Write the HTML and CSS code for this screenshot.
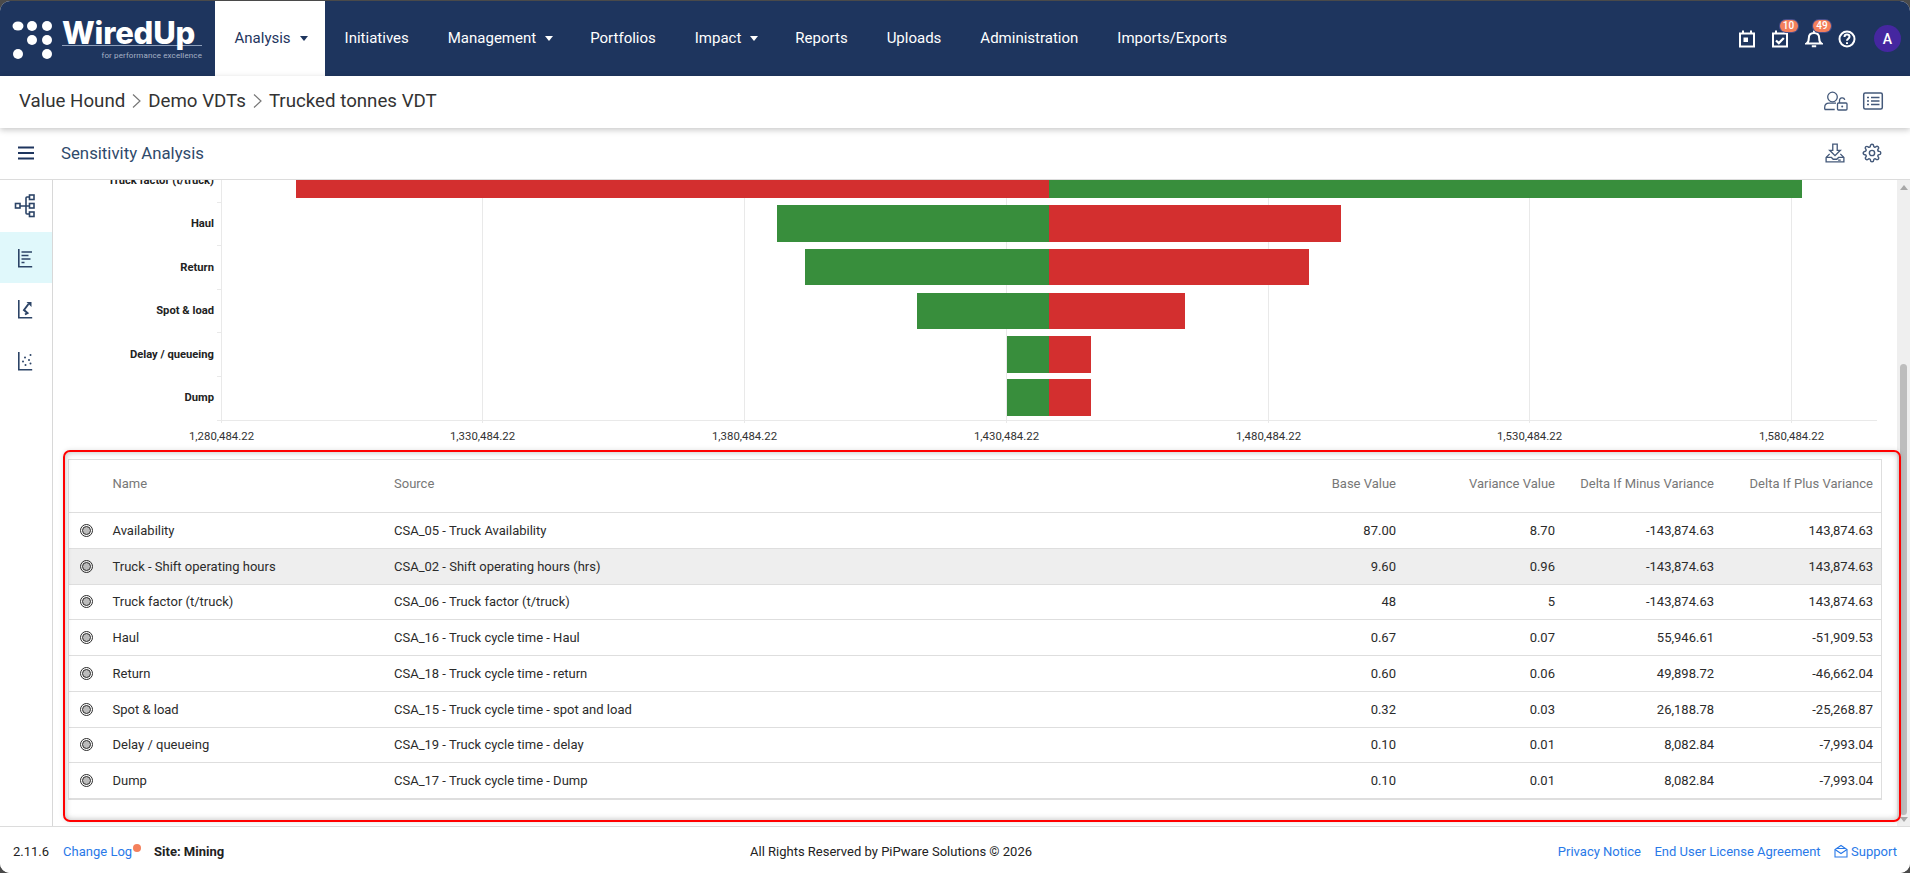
FILE: index.html
```html
<!DOCTYPE html>
<html lang="en">
<head>
<meta charset="utf-8">
<title>Sensitivity Analysis</title>
<link rel="stylesheet" href="styles.css">
</head>
<body>
<div class="app">
  <header class="topbar">
    <div class="logo">
      <svg class="logo-dots" width="48" height="40" viewBox="0 0 48 40"><g fill="#fff"><ellipse cx="6" cy="7" rx="5.5" ry="4.5"/><circle cx="20" cy="7" r="5"/><circle cx="35" cy="7" r="5"/><circle cx="20" cy="21" r="5"/><circle cx="35" cy="21" r="5"/><circle cx="6" cy="35" r="5"/><circle cx="35" cy="35" r="5"/></g></svg>
      <div class="logo-text">
        <div class="logo-name">WiredUp</div>
        <div class="logo-tag">for performance excellence</div>
      </div>
    </div>
    <nav class="nav">
      <a class="nav-item active">Analysis<span class="caret"></span></a>
      <a class="nav-item">Initiatives</a>
      <a class="nav-item">Management<span class="caret"></span></a>
      <a class="nav-item">Portfolios</a>
      <a class="nav-item">Impact<span class="caret"></span></a>
      <a class="nav-item">Reports</a>
      <a class="nav-item">Uploads</a>
      <a class="nav-item">Administration</a>
      <a class="nav-item">Imports/Exports</a>
    </nav>
    <div class="top-actions">
      <span class="top-icon"><svg width="18" height="18" viewBox="0 0 18 18" fill="none" stroke="#fff" stroke-width="2"><rect x="2" y="3.500" width="14" height="13"/><path d="M5 0.500v3M13 0.500v3"/><rect x="5.500" y="7.500" width="4.500" height="4.500" fill="#fff" stroke="none"/></svg></span>
      <span class="top-icon"><svg width="18" height="18" viewBox="0 0 18 18" fill="none" stroke="#fff" stroke-width="2"><rect x="2" y="3.500" width="14" height="13"/><path d="M5 0.500v3M13 0.500v3"/><path d="M5 10.500l2.800 2.600 5-5.200" stroke-width="2.200"/></svg><span class="badge">10</span></span>
      <span class="top-icon"><svg width="18" height="18" viewBox="0 0 18 18" fill="none" stroke="#fff" stroke-width="2"><path d="M1.500 13.500c1.800-1.200 2.300-2.600 2.300-5.300 0-3.100 2-5.200 5.200-5.200s5.200 2.100 5.200 5.200c0 2.700.5 4.100 2.300 5.300z"/><path d="M9 0.500v2M6.800 16.200h4.400"/></svg><span class="badge">49</span></span>
      <span class="top-icon"><svg width="18" height="18" viewBox="0 0 18 18" fill="none" stroke="#fff" stroke-width="2"><circle cx="9" cy="9" r="7.500"/><path d="M6.500 7c0-1.500 1.100-2.400 2.500-2.400S11.500 5.500 11.500 6.800c0 1.900-2.500 1.900-2.500 3.900"/><path d="M9 12.200v1.800"/></svg></span>
      <span class="avatar">A</span>
    </div>
  </header>

  <div class="crumbbar">
    <div class="crumbs">
      <span>Value Hound</span>
      <svg class="chev" width="9" height="16" viewBox="0 0 9 16" fill="none" stroke="#777" stroke-width="1.200"><path d="M1 1.500l7 6.500-7 6.500"/></svg>
      <span>Demo VDTs</span>
      <svg class="chev" width="9" height="16" viewBox="0 0 9 16" fill="none" stroke="#777" stroke-width="1.200"><path d="M1 1.500l7 6.500-7 6.500"/></svg>
      <span>Trucked tonnes VDT</span>
    </div>
    <div class="bar-icons">
      <svg width="24" height="24" viewBox="0 0 24 24" fill="none" stroke="#44597a" stroke-width="1.300"><circle cx="8.500" cy="8" r="4.800"/><path d="M0.700 20.500v-2c0-2.800 2-4.300 4.300-4.300h7"/><path d="M0.700 20.500h10"/><rect x="13.500" y="14" width="9.500" height="7" rx="1"/><path d="M15.500 14v-2.500a2.700 2.700 0 0 1 5.300-.6"/><circle cx="18.200" cy="17.500" r="1" fill="#44597a" stroke="none"/></svg>
      <svg width="24" height="24" viewBox="0 0 24 24" fill="none" stroke="#44597a" stroke-width="1.500"><rect x="2.700" y="4" width="18.600" height="16" rx="1.500"/><path d="M6 8.500h2M6 12h2M6 15.500h2M10 8.500h8.500M10 12h8.500M10 15.500h8.500"/></svg>
    </div>
  </div>

  <div class="titlebar">
    <svg class="burger" width="16" height="14" viewBox="0 0 16 14" fill="none" stroke="#1e355e" stroke-width="1.800"><path d="M0 1.500h16M0 7h16M0 12.500h16"/></svg>
    <div class="page-title">Sensitivity Analysis</div>
    <div class="bar-icons">
      <svg width="24" height="24" viewBox="-1.500 -1.500 27 27" fill="none" stroke="#44597a" stroke-width="1.500"><path d="M9.500 2h5v7h3.500L12 15 6 9h3.500z"/><path d="M6 13L2 17v5h20v-5l-4-4"/><path d="M2 17h6l2 2h4l2-2h6"/><path d="M15.500 20h3"/></svg>
      <svg width="24" height="24" viewBox="-3 -3 30 30" fill="none" stroke="#44597a" stroke-width="1.800"><circle cx="12" cy="12" r="3.300"/><path d="M19.400 15a1.650 1.650 0 0 0 .33 1.820l.06.06a2 2 0 0 1 0 2.830 2 2 0 0 1-2.830 0l-.06-.06a1.650 1.650 0 0 0-1.820-.33 1.650 1.650 0 0 0-1 1.510V21a2 2 0 0 1-2 2 2 2 0 0 1-2-2v-.09A1.650 1.650 0 0 0 9 19.400a1.650 1.650 0 0 0-1.820.33l-.06.06a2 2 0 0 1-2.830 0 2 2 0 0 1 0-2.830l.06-.06a1.650 1.650 0 0 0 .33-1.820 1.650 1.650 0 0 0-1.510-1H3a2 2 0 0 1-2-2 2 2 0 0 1 2-2h.09A1.650 1.650 0 0 0 4.600 9a1.650 1.650 0 0 0-.33-1.820l-.06-.06a2 2 0 0 1 0-2.830 2 2 0 0 1 2.830 0l.06.06a1.650 1.650 0 0 0 1.820.33H9a1.650 1.650 0 0 0 1-1.510V3a2 2 0 0 1 2-2 2 2 0 0 1 2 2v.09a1.650 1.650 0 0 0 1 1.510 1.650 1.650 0 0 0 1.820-.33l.06-.06a2 2 0 0 1 2.830 0 2 2 0 0 1 0 2.830l-.06.06a1.650 1.650 0 0 0-.33 1.820V9a1.650 1.650 0 0 0 1.510 1H21a2 2 0 0 1 2 2 2 2 0 0 1-2 2h-.09a1.650 1.650 0 0 0-1.510 1z"/></svg>
    </div>
  </div>

  <main class="main">
    <aside class="sidebar">
      <div class="side-item"><svg width="24" height="24" viewBox="0 0 24 24" fill="none" stroke="#2c4467" stroke-width="1.600"><rect x="1.500" y="9.500" width="4.500" height="4.500"/><rect x="15.500" y="1" width="4.500" height="4.500"/><rect x="15.500" y="9.500" width="4.500" height="4.500"/><rect x="15.500" y="18" width="4.500" height="4.500"/><path d="M6 12h9.500M15.500 3h-2.500q-1 0-1 1v15q0 1 1 1h2.500"/></svg></div>
      <div class="side-item active"><svg width="24" height="24" viewBox="0 0 24 24" fill="none" stroke="#2c4467" stroke-width="1.600"><path d="M4.800 3v17.800h13.400"/><path d="M7.500 6h10.500M7.500 9.500h7M7.500 13h9M7.500 16.500h3"/></svg></div>
      <div class="side-item"><svg width="24" height="24" viewBox="0 0 24 24" fill="none" stroke="#2c4467" stroke-width="1.600"><path d="M4.800 3v17.800h13.400"/><path d="M11 17.500l2.500-1.500-3.500-3 4.500-6" stroke-width="2"/><path d="M12.500 5h5v5z" fill="#2c4467" stroke="none"/></svg></div>
      <div class="side-item"><svg width="24" height="24" viewBox="0 0 24 24" fill="none" stroke="#2c4467" stroke-width="1.600"><path d="M4.800 3v17.800h13.400"/><g fill="#2c4467" stroke="none"><circle cx="16.500" cy="6" r="1"/><circle cx="11" cy="8.500" r="1"/><circle cx="9" cy="12.500" r="1"/><circle cx="15" cy="11" r="1"/><circle cx="16.500" cy="14.500" r="1"/><circle cx="11.500" cy="16" r="1"/></g></svg></div>
    </aside>
    <section class="content">
      <svg class="chart" width="1844" height="270" viewBox="53 180 1844 270">
        <g class="grid-lines">
          <path d="M482.500 180V423M744.500 180V423M1006.500 180V423M1268.500 180V423M1529.500 180V423M1791.500 180V423"/>
          <path d="M221.500 180V423M217 420.500H1877M217 202.500h4M217 245.500h4M217 289.500h4M217 332.500h4M217 376.500h4"/>
        </g>
        <g class="bars-neg">
          <rect x="296" y="162" width="753" height="36"/>
          <rect x="1049" y="205" width="292" height="37"/>
          <rect x="1049" y="249" width="260" height="36"/>
          <rect x="1049" y="293" width="136" height="36"/>
          <rect x="1049" y="336" width="42" height="37"/>
          <rect x="1049" y="379" width="42" height="37"/>
        </g>
        <g class="bars-pos">
          <rect x="1049" y="162" width="753" height="36"/>
          <rect x="777" y="205" width="272" height="37"/>
          <rect x="805" y="249" width="244" height="36"/>
          <rect x="917" y="293" width="132" height="36"/>
          <rect x="1007" y="336" width="42" height="37"/>
          <rect x="1007" y="379" width="42" height="37"/>
        </g>
        <g class="cat-labels">
          <text x="214" y="184">Truck factor (t/truck)</text>
          <text x="214" y="227">Haul</text>
          <text x="214" y="271">Return</text>
          <text x="214" y="314">Spot &amp; load</text>
          <text x="214" y="358">Delay / queueing</text>
          <text x="214" y="401">Dump</text>
        </g>
        <g class="val-labels">
          <text x="221.500" y="440">1,280,484.22</text>
          <text x="482.500" y="440">1,330,484.22</text>
          <text x="744.500" y="440">1,380,484.22</text>
          <text x="1006.500" y="440">1,430,484.22</text>
          <text x="1268.500" y="440">1,480,484.22</text>
          <text x="1529.500" y="440">1,530,484.22</text>
          <text x="1791.500" y="440">1,580,484.22</text>
        </g>
      </svg>
      <div class="table">
        <div class="row head">
          <div></div><div>Name</div><div>Source</div><div class="num">Base Value</div><div class="num">Variance Value</div><div class="num">Delta If Minus Variance</div><div class="num">Delta If Plus Variance</div>
        </div>
        <div class="row"><div class="ic"><span class="target"></span></div><div>Availability</div><div>CSA_05 - Truck Availability</div><div class="num">87.00</div><div class="num">8.70</div><div class="num">-143,874.63</div><div class="num">143,874.63</div></div>
        <div class="row hover"><div class="ic"><span class="target"></span></div><div>Truck - Shift operating hours</div><div>CSA_02 - Shift operating hours (hrs)</div><div class="num">9.60</div><div class="num">0.96</div><div class="num">-143,874.63</div><div class="num">143,874.63</div></div>
        <div class="row"><div class="ic"><span class="target"></span></div><div>Truck factor (t/truck)</div><div>CSA_06 - Truck factor (t/truck)</div><div class="num">48</div><div class="num">5</div><div class="num">-143,874.63</div><div class="num">143,874.63</div></div>
        <div class="row"><div class="ic"><span class="target"></span></div><div>Haul</div><div>CSA_16 - Truck cycle time - Haul</div><div class="num">0.67</div><div class="num">0.07</div><div class="num">55,946.61</div><div class="num">-51,909.53</div></div>
        <div class="row"><div class="ic"><span class="target"></span></div><div>Return</div><div>CSA_18 - Truck cycle time - return</div><div class="num">0.60</div><div class="num">0.06</div><div class="num">49,898.72</div><div class="num">-46,662.04</div></div>
        <div class="row"><div class="ic"><span class="target"></span></div><div>Spot &amp; load</div><div>CSA_15 - Truck cycle time - spot and load</div><div class="num">0.32</div><div class="num">0.03</div><div class="num">26,188.78</div><div class="num">-25,268.87</div></div>
        <div class="row"><div class="ic"><span class="target"></span></div><div>Delay / queueing</div><div>CSA_19 - Truck cycle time - delay</div><div class="num">0.10</div><div class="num">0.01</div><div class="num">8,082.84</div><div class="num">-7,993.04</div></div>
        <div class="row"><div class="ic"><span class="target"></span></div><div>Dump</div><div>CSA_17 - Truck cycle time - Dump</div><div class="num">0.10</div><div class="num">0.01</div><div class="num">8,082.84</div><div class="num">-7,993.04</div></div>
      </div>
    </section>
    <div class="scrollbar">
      <span class="arrow up"></span>
      <span class="thumb"></span>
      <span class="arrow down"></span>
    </div>
    <div class="highlight"></div>
  </main>

  <footer class="footer">
    <div class="foot-left">
      <span>2.11.6</span>
      <a class="link changelog">Change Log</a>
      <strong>Site: Mining</strong>
    </div>
    <div>All Rights Reserved by PiPware Solutions © 2026</div>
    <div class="foot-right">
      <a class="link">Privacy Notice</a>
      <a class="link">End User License Agreement</a>
      <a class="link support"><svg width="14" height="14" viewBox="0 0 14 14" fill="none" stroke="#2979e8" stroke-width="1.100"><path d="M1 5.500v7.500h12V5.500L7 1.500z"/><path d="M1 5.500l6 4 6-4"/><path d="M3 4.500h8"/></svg>Support</a>
    </div>
  </footer>
</div>
</body>
</html>
```
FILE: styles.css
```css
* { box-sizing: border-box; }
html, body { height: 100%; }
body {
  margin: 0;
  background: #4a4a4a;
  font-family: Roboto, "Liberation Sans", sans-serif;
  font-size: 13px;
  color: #2b2b2b;
  overflow: hidden;
}
.app {
  height: 872px;
  margin-top: 1px;
  display: flex;
  flex-direction: column;
  background: #fff;
  border-radius: 10px;
  overflow: hidden;
}

/* top navigation */
.topbar {
  height: 75px;
  flex: none;
  display: flex;
  background: #1e355e;
  color: #fff;
}
.logo {
  width: 215px;
  flex: none;
  display: flex;
  align-items: flex-start;
  padding: 18px 0 0 12px;
  gap: 2px;
}
.logo-dots { flex: none; }
.logo-text { width: 140px; flex: none; }
.logo-name {
  font-family: Inter, sans-serif;
  font-weight: 800;
  font-size: 31px;
  line-height: 30px;
  letter-spacing: -.2px;
  border-bottom: 1px solid #8fa0bb;
  height: 28px;
  margin-top: -1px;
}
.logo-tag {
  font-size: 8px;
  letter-spacing: .12px;
  color: #a6b2c6;
  text-align: right;
  margin-top: 5px;
}
.nav { display: flex; flex: 1; }
.nav-item {
  display: flex;
  align-items: center;
  padding: 0 19.5px 2px;
  font-size: 15px;
  color: #fff;
}
.nav-item.active { background: #fff; color: #1e355e; }
.caret {
  width: 0;
  height: 0;
  margin: 2px -2px 0 9px;
  border-left: 4px solid transparent;
  border-right: 4px solid transparent;
  border-top: 5px solid currentColor;
}
.top-actions {
  display: flex;
  align-items: center;
  padding-right: 9px;
}
.top-icon {
  position: relative;
  width: 33.5px;
  height: 24px;
  display: flex;
  align-items: center;
  justify-content: center;
}
.badge {
  position: absolute;
  top: -7px;
  left: 16px;
  width: 18px;
  height: 12px;
  border-radius: 6px;
  background: #f47f5b;
  color: #fff;
  font-size: 10px;
  font-weight: 500;
  line-height: 12px;
  text-align: center;
  box-shadow: 0 0 0 1px #4a4f8a;
}
.avatar {
  width: 27px;
  height: 27px;
  margin-left: 10px;
  border-radius: 50%;
  background: #4527a0;
  color: #fff;
  font-size: 14px;
  font-weight: 500;
  display: flex;
  align-items: center;
  justify-content: center;
}

/* bars under nav */
.crumbbar {
  height: 52px;
  flex: none;
  position: relative;
  z-index: 2;
  display: flex;
  align-items: center;
  justify-content: space-between;
  padding: 0 25px 2px 19px;
  background: #fff;
  box-shadow: 0 2px 6px rgba(0,0,0,.22);
}
.crumbs {
  display: flex;
  align-items: center;
  gap: 7px;
  font-size: 18.72px;
  color: #333;
}
.chev { flex: none; }
.bar-icons { display: flex; gap: 13px; margin-left: auto; }
.titlebar {
  height: 52px;
  flex: none;
  display: flex;
  align-items: center;
  padding: 0 26px 1px 18px;
  background: #fff;
  border-bottom: 1px solid #dcdcdc;
}
.burger { flex: none; }
.page-title {
  margin-left: 27px;
  font-size: 16.8px;
  color: #2f4a6b;
}

/* main */
.main {
  position: relative;
  flex: 1;
  min-height: 0;
  display: flex;
}
.sidebar {
  width: 53px;
  flex: none;
  border-right: 1px solid #d8d8d8;
}
.side-item {
  height: 51.7px;
  display: flex;
  align-items: center;
  justify-content: center;
}
.side-item.active { background: #e0f8fb; }
.content {
  flex: 1;
  min-width: 0;
  overflow: hidden;
}
.chart { display: block; }
.grid-lines path { stroke: #e9e9e9; stroke-width: 1; fill: none; }
.bars-neg rect { fill: #d32f2f; }
.bars-pos rect { fill: #388e3c; }
.cat-labels text {
  font-family: Roboto, sans-serif;
  font-size: 11.2px;
  font-weight: 700;
  text-anchor: end;
  fill: #222;
}
.val-labels text {
  font-family: Roboto, sans-serif;
  font-size: 11.4px;
  text-anchor: middle;
  fill: #333;
}
.table {
  margin: 9px 15px 0;
  border: 1px solid #dedede;
  border-bottom-width: 2px;
}
.row {
  display: grid;
  grid-template-columns: 43.5px 281.5px 1fr 159px 159px 159px 159px;
  align-items: center;
  height: 35.75px;
  border-top: 1px solid #dedede;
}
.row > div { padding-right: 8px; white-space: nowrap; }
.row.head {
  height: 52px;
  border-top: 0;
  color: #777;
  padding-bottom: 6px;
}
.row.hover { background: #eee; }
.num { text-align: right; }
.ic { padding-left: 11px; display: flex; }
.target {
  width: 13px;
  height: 13px;
  border: 1.5px solid #2b2b2b;
  border-radius: 50%;
  display: flex;
  align-items: center;
  justify-content: center;
}
.target::after {
  content: "";
  width: 7px;
  height: 7px;
  border: 1.6px solid #2b2b2b;
  border-radius: 50%;
  background: #bbb;
}
.scrollbar {
  width: 13px;
  flex: none;
  display: flex;
  flex-direction: column;
  align-items: center;
  background: #efefef;
  padding: 5px 0 4px;
}
.arrow {
  width: 0;
  height: 0;
  border-left: 4px solid transparent;
  border-right: 4px solid transparent;
}
.arrow.up { border-bottom: 5px solid #a8a8a8; }
.arrow.down { border-top: 5px solid #a8a8a8; margin-top: auto; }
.thumb {
  width: 7px;
  height: 451px;
  margin-top: 174px;
  background: #bdbdbd;
  border-radius: 4px;
}
.highlight {
  position: absolute;
  left: 63px;
  top: 270px;
  width: 1838px;
  height: 372px;
  border: 2px solid #f00;
  border-radius: 7px;
  box-shadow: 0 0 5px rgba(0,0,0,.12), inset 0 0 6px rgba(0,0,0,.28);
  pointer-events: none;
}

/* footer */
.footer {
  height: 47px;
  flex: none;
  display: flex;
  align-items: center;
  justify-content: space-between;
  padding: 2px 13px 0 13px;
  border-top: 1px solid #dcdcdc;
  background: #fff;
  color: #222;
}
.foot-left { display: flex; align-items: center; gap: 14px; }
.foot-left strong { font-weight: 700; margin-left: 8px; }
.foot-right { display: flex; align-items: center; gap: 13.5px; }
.link { color: #2979e8; }
.changelog { position: relative; }
.changelog::after {
  content: "";
  position: absolute;
  right: -9px;
  top: 0;
  width: 8px;
  height: 8px;
  border-radius: 50%;
  background: #f4805c;
}
.support { display: flex; align-items: center; gap: 3px; }
```
